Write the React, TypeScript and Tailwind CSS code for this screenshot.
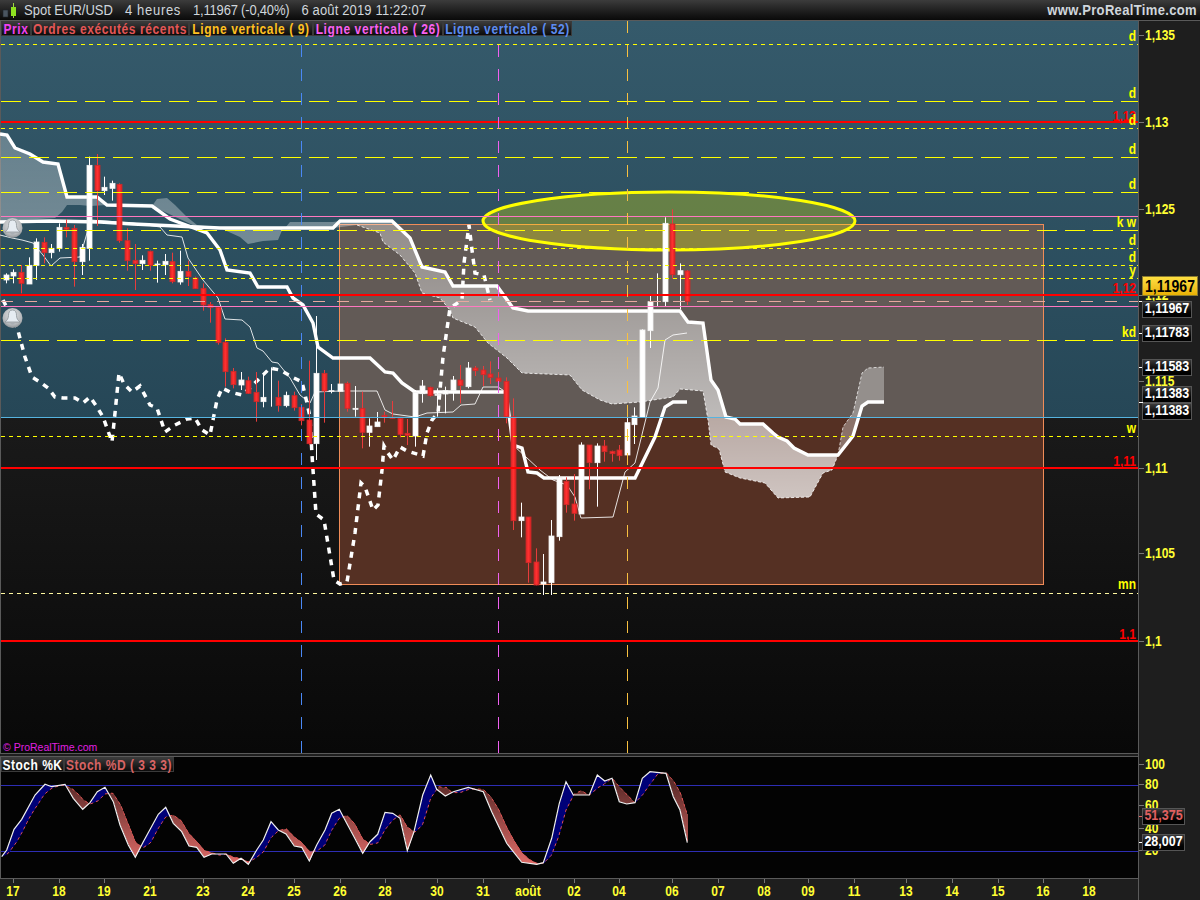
import React from 'react';

type Candle = [number, 'W' | 'R', number, number, number, number];

// candle rows: x, colour, wick top, body top, body bottom, wick bottom (3x crop units)
const leftCandles: Candle[] = [
  [19, 'W', 430, 435, 450, 460], [40, 'W', 418, 427, 438, 460], [64, 'R', 405, 427, 460, 490],
  [88, 'W', 382, 406, 462, 462], [109, 'W', 325, 336, 406, 450], [133, 'R', 322, 337, 368, 400],
  [154, 'W', 342, 355, 368, 385], [178, 'W', 280, 292, 355, 365], [199, 'R', 268, 292, 298, 322],
  [223, 'R', 285, 295, 395, 470], [247, 'W', 342, 352, 395, 435], [268, 'W', 80, 106, 355, 392],
  [292, 'R', 72, 106, 182, 288], [313, 'W', 140, 172, 182, 195], [337, 'W', 152, 160, 175, 212],
  [358, 'R', 160, 163, 332, 338], [382, 'R', 295, 332, 392, 422], [406, 'R', 342, 391, 401, 480],
  [427, 'W', 376, 391, 401, 420], [451, 'R', 362, 364, 406, 422], [472, 'W', 392, 402, 404, 458],
  [496, 'W', 372, 394, 404, 435], [517, 'R', 368, 395, 455, 460], [541, 'W', 362, 424, 456, 464],
  [565, 'R', 392, 424, 440, 468], [586, 'R', 440, 444, 476, 476], [610, 'R', 460, 475, 525, 542],
  [631, 'R', 516, 524, 532, 578], [655, 'R', 528, 532, 638, 644], [676, 'R', 625, 637, 725, 770],
  [700, 'R', 714, 724, 764, 775], [724, 'W', 726, 750, 765, 780], [745, 'R', 740, 752, 790, 792],
  [769, 'R', 726, 787, 815, 875], [790, 'W', 730, 802, 815, 832], [814, 'W', 712, 802, 803, 830],
  [835, 'R', 752, 802, 827, 845], [859, 'W', 785, 796, 827, 832], [883, 'R', 785, 797, 833, 842],
  [904, 'R', 822, 832, 872, 886], [928, 'R', 692, 870, 941, 945], [949, 'W', 558, 730, 941, 990],
  [973, 'R', 720, 730, 783, 878], [994, 'W', 762, 782, 784, 790],
];

const rightCandles: Candle[] = [
  [0, 'W', 552, 552, 574, 574], [21, 'R', 545, 550, 625, 635], [45, 'W', 558, 625, 628, 650],
  [66, 'R', 575, 625, 697, 745], [88, 'W', 655, 678, 697, 740], [112, 'W', 636, 666, 680, 680],
  [133, 'R', 635, 646, 651, 668], [157, 'R', 603, 653, 655, 655], [180, 'R', 655, 655, 703, 712],
  [202, 'R', 657, 700, 706, 735], [226, 'W', 570, 578, 708, 740], [247, 'W', 540, 558, 581, 608],
  [271, 'R', 560, 562, 587, 590], [292, 'W', 565, 583, 586, 650], [316, 'W', 560, 572, 582, 640],
  [340, 'W', 528, 540, 572, 602], [361, 'R', 495, 540, 556, 610], [385, 'W', 486, 504, 560, 565],
  [406, 'R', 498, 504, 512, 528], [430, 'R', 498, 510, 524, 558], [451, 'R', 484, 522, 532, 552],
  [475, 'R', 516, 534, 544, 556], [498, 'R', 532, 544, 650, 670], [520, 'R', 595, 650, 962, 990],
  [544, 'W', 908, 951, 962, 1012], [565, 'R', 951, 951, 1088, 1148], [589, 'R', 1045, 1086, 1155, 1156],
  [610, 'W', 1062, 1146, 1152, 1185], [634, 'W', 960, 1008, 1148, 1185], [658, 'W', 825, 832, 1010, 1022],
  [679, 'R', 832, 844, 914, 938], [703, 'R', 822, 912, 940, 962], [724, 'W', 727, 735, 942, 942],
  [748, 'R', 735, 735, 788, 868], [772, 'W', 730, 738, 788, 920], [793, 'R', 720, 738, 755, 785],
  [817, 'R', 752, 754, 761, 785], [838, 'R', 735, 750, 767, 782], [862, 'W', 635, 668, 765, 765],
  [883, 'W', 622, 648, 674, 732], [907, 'W', 388, 390, 652, 652], [931, 'W', 288, 305, 392, 444],
  [952, 'W', 220, 320, 320, 320], [976, 'W', 52, 70, 305, 318], [997, 'R', 28, 72, 224, 236],
  [1021, 'W', 190, 212, 224, 328], [1042, 'R', 210, 213, 304, 315],
];

const candles = [
  ...leftCandles.map(([x, c, a, b, d, e]) => ({ x: Math.round(x / 3), c, a: 130 + a / 3, b: 130 + b / 3, d: 130 + d / 3, e: 130 + e / 3 })),
  ...rightCandles.map(([x, c, a, b, d, e]) => ({ x: Math.round(340 + x / 3), c, a: 200 + a / 3, b: 200 + b / 3, d: 200 + d / 3, e: 200 + e / 3 })),
];

const line1 =
  '0,134 7,135 15,148 30,154 43,162 58,164 67,197 97,197 107,205 152,206 170,219 207,233 220,250 227,270 250,273 258,287 287,287 293,298 303,305 313,323 318,347 333,358 370,358 385,372 393,373 402,383 415,392 506,392 513,445 522,448 528,472 537,473 544,478 635,478 655,437 665,407 673,402 687,402';
const line2 =
  '0,222 50,221 100,222 133,224 197,227 220,228 333,228 340,221 392,221 410,238 422,267 445,272 453,286 497,286 513,308 528,311 680,311 688,322 703,323 711,380 718,390 726,417 735,419 740,424 763,424 773,433 778,437 787,441 794,448 808,455 838,455 853,436 862,406 868,402 884,402';
const thinLine =
  '0,235 12,238 22,240 33,243 43,255 51,266 60,258 80,257 87,233 90,220 133,223 160,227 167,235 182,237 188,258 203,280 218,298 225,319 242,320 250,327 257,348 263,351 272,362 278,363 290,378 300,395 310,403 315,392 340,391 377,391 385,410 393,414 415,417 427,413 453,412 461,405 475,404 483,387 498,387 506,392 513,445 540,470 553,480 567,485 575,497 581,518 613,517 625,472 635,463 650,402 658,388 665,340 673,335 687,333';
const dashedLine =
  '3,300 17,327 25,357 32,377 40,382 48,388 55,397 63,398 75,398 83,403 90,397 97,407 103,417 112,442 115,413 119,373 124,384 132,392 140,386 150,405 157,408 165,432 175,425 187,419 195,418 202,430 210,435 217,400 222,388 230,392 242,395 250,388 258,380 270,368 280,370 292,377 302,382 307,403 310,417 312,455 316,514 324,520 334,580 340,584 347,582 355,533 361,483 365,487 373,510 378,505 382,470 384,446 388,453 393,460 400,447 407,451 423,456 427,433 432,420 438,413 443,357 450,308 462,300 464,263 469,225 472,250 475,273 484,275 490,300';

const cloudBottom =
  '357,225 380,233 383,242 400,255 415,273 422,293 440,298 450,310 453,318 475,327 488,343 507,358 522,373 570,375 582,390 600,400 612,404 640,402 673,397 680,389 703,391 708,420 711,445 719,449 725,472 740,478 765,483 778,498 810,497 823,473 832,470 838,455';
const cloudTop =
  '838,455 808,455 794,448 787,441 778,437 773,433 763,424 740,424 735,419 726,417 718,390 711,380 703,323 688,322 680,311 528,311 513,308 497,286 453,286 445,272 422,267 410,238 392,221 340,221 333,228 357,225';

const clouds = [
  '0,134 7,135 15,148 30,154 43,162 58,164 67,197 97,197 107,205 90,206 80,205 67,205 62,212 55,218 20,220 0,222',
  '152,206 157,199 167,198 175,205 187,217 197,225 220,228 240,237 248,244 263,241 278,240 283,228 197,227',
  '285,228 290,222 333,222 340,221 333,228',
];

const hLines = [
  { y: 44, c: '#ffff00', d: '4 4', w: 1 }, { y: 101, c: '#ffff00', d: '20 8', w: 1 },
  { y: 128, c: '#ffff00', d: '4 4', w: 1 }, { y: 157, c: '#ffff00', d: '20 8', w: 1 },
  { y: 192, c: '#ffff00', d: '20 8', w: 1 }, { y: 216, c: '#ff78c0', d: '', w: 1 },
  { y: 230, c: '#ffff00', d: '20 8', w: 1 }, { y: 248, c: '#ffff00', d: '4 4', w: 1 },
  { y: 265, c: '#ffff00', d: '4 4', w: 1 }, { y: 278, c: '#ffff00', d: '4 4', w: 1 },
  { y: 301, c: '#e8a8a0', d: '12 12', w: 1 }, { y: 306, c: '#ff78c0', d: '', w: 1 },
  { y: 340, c: '#ffff00', d: '20 8', w: 1 }, { y: 417, c: '#56b4e0', d: '', w: 1 },
  { y: 436, c: '#ffff00', d: '4 4', w: 1 }, { y: 593, c: '#fff8a0', d: '4 4', w: 1 },
  { y: 122, c: '#ff0000', d: '', w: 2 }, { y: 295, c: '#ff0000', d: '', w: 2 },
  { y: 468, c: '#ff0000', d: '', w: 2 }, { y: 641, c: '#ff0000', d: '', w: 2 },
];

const vLines = [
  { x: 301.5, c: '#4a88f5' },
  { x: 498.5, c: '#f060f0' },
  { x: 627.5, c: '#f8c040' },
];

const chartLabels = [
  { t: 'd', y: 41, c: '#ffff00' }, { t: 'd', y: 98, c: '#ffff00' }, { t: '1,13', y: 121, c: '#ff0000' },
  { t: 'd', y: 125, c: '#ffff00' }, { t: 'd', y: 154, c: '#ffff00' }, { t: 'd', y: 189, c: '#ffff00' },
  { t: 'k w', y: 227, c: '#ffff00' }, { t: 'd', y: 245, c: '#ffff00' }, { t: 'd', y: 262, c: '#ffff00' },
  { t: 'y', y: 275, c: '#ffff00' }, { t: '1,12', y: 293, c: '#ff0000' }, { t: 'kd', y: 337, c: '#ffff00' },
  { t: 'w', y: 433, c: '#ffff00' }, { t: '1,11', y: 466, c: '#ff0000' }, { t: 'mn', y: 589, c: '#ffff00' },
  { t: '1,1', y: 639, c: '#ff0000' },
];

const legend = [
  { t: 'Prix', c: 'text-[#f040f0]', w: 'w-[30px]' },
  { t: 'Ordres exécutés récents', c: 'text-[#e45656]', w: 'w-[158px]' },
  { t: 'Ligne verticale ( 9)', c: 'text-[#ffc020]', w: 'w-[124px]' },
  { t: 'Ligne verticale ( 26)', c: 'text-[#f860f0]', w: 'w-[130px]' },
  { t: 'Ligne verticale ( 52)', c: 'text-[#5c8cf0]', w: 'w-[129px]' },
];

const priceTicks = [
  { t: '1,135', y: 35 }, { t: '1,13', y: 122 }, { t: '1,125', y: 209 }, { t: '1,12', y: 295 },
  { t: '1,115', y: 381 }, { t: '1,11', y: 468 }, { t: '1,105', y: 553 }, { t: '1,1', y: 641 },
  { t: '100', y: 764 }, { t: '80', y: 784 }, { t: '60', y: 805 }, { t: '40', y: 828 }, { t: '20', y: 850 },
];

const priceBoxes = [
  { t: '1,11967', y: 301, tick: 301, w: 'w-[50px]', color: 'text-white', tickColor: 'bg-white' },
  { t: '1,11783', y: 325, tick: 333, w: 'w-[50px]', color: 'text-white', tickColor: 'bg-white' },
  { t: '1,11583', y: 359, tick: 367, w: 'w-[50px]', color: 'text-white', tickColor: 'bg-white' },
  { t: '1,11383', y: 386, tick: 402, w: 'w-[50px]', color: 'text-white', tickColor: 'bg-white' },
  { t: '1,11383', y: 403, tick: 402, w: 'w-[50px]', color: 'text-white', tickColor: 'bg-white' },
  { t: '51,375', y: 808, tick: 816, w: 'w-[43px]', color: 'text-[#e06060]', tickColor: 'bg-[#e06060]' },
  { t: '28,007', y: 834, tick: 842, w: 'w-[43px]', color: 'text-white', tickColor: 'bg-white' },
];

const dateTicks = [
  ['17', 13], ['18', 59], ['19', 104], ['21', 150], ['23', 203], ['24', 248], ['25', 294], ['26', 340],
  ['28', 385], ['30', 437], ['31', 483], ['août', 528], ['02', 574], ['04', 619], ['06', 672], ['07', 718],
  ['08', 764], ['09', 808], ['11', 854], ['13', 906], ['14', 952], ['15', 998], ['16', 1043], ['18', 1089],
] as const;

// %K in 3x crop units, the second part is offset by 1200
const kRaw: [number, number][] = [
  [5, 380], [20, 360], [42, 298], [65, 268], [105, 195], [135, 163], [155, 170], [195, 163], [220, 205],
  [248, 238], [270, 218], [292, 185], [315, 172], [340, 215], [360, 285], [385, 345], [406, 382], [430, 335],
  [475, 253], [497, 232], [520, 280], [545, 305], [567, 348], [590, 352], [612, 382], [635, 372], [678, 372],
  [700, 400], [723, 385], [745, 403], [770, 360], [790, 330], [813, 275], [835, 300], [858, 312], [883, 348],
  [905, 352], [928, 393], [950, 345], [975, 300], [995, 250], [1018, 238], [1040, 280], [1062, 320], [1088, 370],
  [1110, 335], [1133, 313], [1155, 247], [1178, 250], [1200, 265], [1222, 362], [1242, 305], [1268, 195],
  [1292, 135], [1310, 178], [1336, 198], [1360, 185], [1405, 172], [1450, 185], [1475, 245], [1520, 340],
  [1565, 397], [1610, 403], [1630, 398], [1655, 325], [1678, 220], [1698, 155], [1720, 195], [1768, 195],
  [1792, 135], [1814, 153], [1836, 145], [1858, 215], [1880, 222], [1905, 218], [1927, 145], [1950, 125],
  [1998, 130], [2020, 200], [2040, 240], [2062, 338],
];
const kPts = kRaw.map(([x, y]) => [x / 3, 730 + y / 3]);

function kAt(x: number) {
  if (x <= kPts[0][0]) return kPts[0][1];
  for (let i = 1; i < kPts.length; i++) {
    if (x <= kPts[i][0]) {
      const [x0, y0] = kPts[i - 1];
      const [x1, y1] = kPts[i];
      return y0 + ((y1 - y0) * (x - x0)) / (x1 - x0);
    }
  }
  return kPts[kPts.length - 1][1];
}

const dAt = (x: number) => (kAt(x) + kAt(x - 7.6) + kAt(x - 15.2)) / 3;

const stochSlices: { x: number; k: number; d: number }[] = [];
for (let x = 2; x <= 687; x += 1) stochSlices.push({ x, k: kAt(x), d: dAt(x) });
const dLine = stochSlices.filter((s) => s.x > 6).map((s) => `${s.x},${s.d.toFixed(1)}`).join(' ');
const kLine = kPts.map(([x, y]) => `${x.toFixed(1)},${y.toFixed(1)}`).join(' ');

function Bell({ cy }: { cy: number }) {
  return (
    <g>
      <circle cx="12.5" cy={cy} r="10" fill="url(#bellBall)" />
      <path
        d={`M12.5 ${cy - 8} c-3 0 -4 2.500 -4 5.500 c0 3 -1.500 5 -3.500 6.500 h15 c-2 -1.500 -3.500 -3.500 -3.500 -6.500 c0 -3 -1 -5.500 -4 -5.500 z`}
        fill="#e6ecf2"
        stroke="#8d9499"
        strokeWidth="0.8"
      />
      <path d={`M10.5 ${cy + 4.500} h4 v1 c0 1.500 -4 1.500 -4 0 z`} fill="#a8aeb4" />
    </g>
  );
}

function PriceChart() {
  return (
    <svg viewBox="0 21 1138 732" width="1138" height="732" className="block">
      <defs>
        <linearGradient id="teal" x1="0" y1="0" x2="0" y2="1">
          <stop offset="0" stopColor="#355a6b" />
          <stop offset="1" stopColor="#264757" />
        </linearGradient>
        <linearGradient id="dark" x1="0" y1="0" x2="0" y2="1">
          <stop offset="0" stopColor="#1a1a1a" />
          <stop offset="1" stopColor="#080808" />
        </linearGradient>
        <linearGradient id="cloud" gradientUnits="userSpaceOnUse" x1="0" y1="130" x2="0" y2="500">
          <stop offset="0" stopColor="#fff" stopOpacity="0.26" />
          <stop offset="0.4" stopColor="#fff" stopOpacity="0.36" />
          <stop offset="1" stopColor="#fff" stopOpacity="0.72" />
        </linearGradient>
        <linearGradient id="redBody" x1="0" y1="0" x2="1" y2="0">
          <stop offset="0" stopColor="#e02828" />
          <stop offset="0.5" stopColor="#ff3030" />
          <stop offset="1" stopColor="#d82020" />
        </linearGradient>
        <radialGradient id="bellBall" cx="0.5" cy="0.35" r="0.7">
          <stop offset="0" stopColor="#e0e2e4" />
          <stop offset="0.7" stopColor="#b4b7ba" />
          <stop offset="1" stopColor="#7d8287" />
        </radialGradient>
      </defs>

      <rect x="0" y="21" width="1138" height="396" fill="url(#teal)" />
      <rect x="0" y="417" width="1138" height="337" fill="url(#dark)" />
      <rect x="0" y="21" width="1" height="733" fill="#5a5a5a" />
      <rect x="339.500" y="224.500" width="704" height="193" fill="#625a56" />
      <rect x="339.500" y="417" width="704" height="167.500" fill="#553023" />
      <rect x="339.500" y="224.500" width="704" height="360" fill="none" stroke="#f08c58" />

      {clouds.map((p) => (
        <polygon key={p} points={p} fill="url(#cloud)" />
      ))}
      <polygon points={`${cloudTop} ${cloudBottom}`} fill="url(#cloud)" />
      <polygon
        points="838,455 853,436 862,406 868,402 884,402 884,367 868,368 862,373 853,413 843,427"
        fill="#fff"
        fillOpacity="0.32"
      />
      <polyline points={cloudBottom} fill="none" stroke="#fff" strokeDasharray="3 2" opacity="0.8" />
      <polyline points="838,455 843,427 853,413 862,373 868,368 884,367" fill="none" stroke="#fff" strokeDasharray="3 2" opacity="0.7" />

      <ellipse cx="669" cy="221" rx="186" ry="29" fill="#ffff00" fillOpacity="0.27" stroke="#ffff00" strokeWidth="3" />

      <polyline points={thinLine} fill="none" stroke="#fff" strokeWidth="1" opacity="0.85" />
      <polyline points={line1} fill="none" stroke="#fff" strokeWidth="3.400" />
      <polyline points={line2} fill="none" stroke="#fff" strokeWidth="3.400" />
      <polyline points={dashedLine} fill="none" stroke="#fff" strokeWidth="3.500" strokeDasharray="6 6" />

      {candles.map((k) => (
        <g key={`${k.x}-${k.a}`}>
          <line x1={k.x + 0.5} x2={k.x + 0.5} y1={k.a} y2={k.e} stroke={k.c === 'W' ? '#fff' : '#e83c3c'} />
          {k.d - k.b > 0.5 && (
            <rect
              x={k.x - 2}
              y={k.b}
              width="5"
              height={k.d - k.b}
              fill={k.c === 'W' ? '#fff' : 'url(#redBody)'}
              stroke={k.c === 'W' ? '#f2f2f2' : '#cc2a2a'}
              strokeWidth="0.8"
            />
          )}
        </g>
      ))}

      {hLines.map((l) => {
        const y = l.w === 1 ? l.y + 0.5 : l.y;
        return <line key={l.y} x1="1" x2="1138" y1={y} y2={y} stroke={l.c} strokeWidth={l.w} strokeDasharray={l.d || undefined} />;
      })}
      {vLines.map((l) => (
        <line key={l.x} x1={l.x} x2={l.x} y1="21" y2="754" stroke={l.c} strokeDasharray="12 12" />
      ))}

      {chartLabels.map((l) => (
        <text
          key={`${l.t}-${l.y}`}
          transform={`translate(1136 ${l.y}) scale(1 1.18)`}
          textAnchor="end"
          fill={l.c}
          fontSize="12"
          fontWeight="700"
        >
          {l.t}
        </text>
      ))}

      <Bell cy={228} />
      <Bell cy={318} />

      <text x="3" y="751" fill="#e020e0" fontSize="10.500">
        © ProRealTime.com
      </text>
    </svg>
  );
}

function StochChart() {
  return (
    <svg viewBox="0 757 1138 121" width="1138" height="121" className="block">
      <defs>
        <linearGradient id="stochRed" gradientUnits="userSpaceOnUse" x1="0" y1="785" x2="0" y2="865">
          <stop offset="0" stopColor="#5e2c2a" />
          <stop offset="1" stopColor="#e06c68" />
        </linearGradient>
      </defs>
      <rect x="0" y="757" width="1138" height="121" fill="#030303" />
      <rect x="0" y="757" width="1" height="121" fill="#5a5a5a" />
      <line x1="1" x2="1138" y1="785.500" y2="785.500" stroke="#2d2db4" />
      <line x1="1" x2="1138" y1="851.500" y2="851.500" stroke="#2d2db4" />
      {stochSlices.map((s) => (
        <rect
          key={s.x}
          x={s.x}
          y={Math.min(s.k, s.d)}
          width="1"
          height={Math.abs(s.k - s.d)}
          fill={s.k < s.d ? '#000078' : 'url(#stochRed)'}
        />
      ))}
      <polyline points={dLine} fill="none" stroke="#e05050" strokeDasharray="3 3" />
      <polyline points={kLine} fill="none" stroke="#f0f0f0" strokeWidth="1.200" />
    </svg>
  );
}

export default function App() {
  return (
    <div className="flex h-[900px] w-[1200px] flex-col overflow-hidden bg-[#1e1e1e] font-['Liberation_Sans',Arial,sans-serif]">
      {/* Title bar */}
      <header className="flex h-[21px] shrink-0 items-center justify-between border-b border-[#5a5a5a] bg-gradient-to-b from-[#3c3c3c] to-[#0a0a0a] pr-[3px] text-[13px] text-[#d0d6dc]">
        <div className="flex items-center">
          <svg width="24" height="20" viewBox="0 0 24 20" className="shrink-0">
            <rect x="3" y="10" width="5" height="7" fill="#4a5560" stroke="#20262c" strokeWidth="0.6" />
            <line x1="13.500" x2="13.500" y1="3" y2="18" stroke="#9cd83c" />
            <rect x="11" y="7" width="5" height="9" fill="#8ee020" />
          </svg>
          <span className="inline-block scale-y-[1.15]">Spot EUR/USD</span>
          <span className="ml-[12px] inline-block scale-y-[1.15] tracking-[0.7px]">4 heures</span>
          <span className="ml-[12px] inline-block scale-y-[1.15] tracking-[-0.2px]">1,11967 (-0,40%)</span>
          <span className="ml-[12px] inline-block scale-y-[1.15] tracking-[0.15px]">6 août 2019 11:22:07</span>
        </div>
        <span className="inline-block scale-y-[1.15] font-bold tracking-[0.35px]">www.ProRealTime.com</span>
      </header>

      <div className="flex flex-1">
        <div className="flex w-[1138px] shrink-0 flex-col">
          {/* Price panel */}
          <div className="relative h-[733px] border-b border-[#5a5a5a]">
            <PriceChart />
            <div className="absolute left-[1px] top-0 flex">
              {legend.map((l) => (
                <span
                  key={l.t}
                  className={`flex h-[15px] items-center justify-center border border-[#3a3a3a] bg-gradient-to-b from-[#3a3a3a] to-[#0c0c0c] text-[12px] font-bold tracking-[0.6px] ${l.c} ${l.w}`}
                >
                  <span className="inline-block scale-y-[1.15]">{l.t}</span>
                </span>
              ))}
            </div>
          </div>

          {/* Stochastic panel */}
          <div className="relative mt-[2px] h-[123px] border-y border-[#5a5a5a]">
            <StochChart />
            <div className="absolute left-[1px] top-0 flex">
              <span className="flex h-[15px] w-[63px] items-center justify-center border border-[#3a3a3a] bg-gradient-to-b from-[#3a3a3a] to-[#0c0c0c] text-[12px] font-bold tracking-[0.5px] text-white">
                <span className="inline-block scale-y-[1.15]">Stoch %K</span>
              </span>
              <span className="flex h-[15px] w-[110px] items-center justify-center border border-[#3a3a3a] bg-gradient-to-b from-[#3a3a3a] to-[#0c0c0c] text-[12px] font-bold tracking-[0.5px] text-[#d86464]">
                <span className="inline-block scale-y-[1.15]">Stoch %D ( 3 3 3)</span>
              </span>
            </div>
          </div>

          {/* Date axis */}
          <div className="relative flex-1">
            {dateTicks.map(([t, x]) => (
              <React.Fragment key={`${t}-${x}`}>
                <span className="absolute top-0 h-[4px] w-[1px] bg-[#777]" style={{ left: x }} />
                <span
                  className="absolute top-[4px] -translate-x-1/2 scale-y-[1.18] text-[12px] font-bold leading-[16px] text-[#ffff33]"
                  style={{ left: x }}
                >
                  {t}
                </span>
              </React.Fragment>
            ))}
          </div>
        </div>

        {/* Price axis */}
        <div className="relative flex-1 border-l border-[#5a5a5a]">
          {priceTicks.map((p) => (
            <React.Fragment key={p.t}>
              <span className="absolute left-0 h-[1px] w-[5px] bg-[#777]" style={{ top: p.y - 21 }} />
              <span
                className="absolute left-[6px] scale-y-[1.18] text-[12px] font-bold leading-[14px] text-[#ffff33]"
                style={{ top: p.y - 28 }}
              >
                {p.t}
              </span>
            </React.Fragment>
          ))}

          <span className="absolute left-[3px] top-[255px] flex h-[20px] w-[56px] items-center justify-center border border-[#8a7a30] bg-gradient-to-b from-[#ffe040] to-[#e8b000] text-[14px] font-bold text-black">
            <span className="inline-block scale-y-[1.12]">1,11967</span>
          </span>

          {priceBoxes.map((b) => (
            <React.Fragment key={`${b.t}-${b.y}`}>
              <span className={`absolute left-0 h-[1px] w-[4px] ${b.tickColor}`} style={{ top: b.tick - 21 }} />
              <span
                className={`absolute left-[3px] flex h-[17px] items-center justify-center border border-[#555] bg-gradient-to-b from-[#3a3a3a] to-black text-[12.5px] font-bold ${b.color} ${b.w}`}
                style={{ top: b.y - 21 }}
              >
                <span className="inline-block scale-y-[1.12]">{b.t}</span>
              </span>
            </React.Fragment>
          ))}
        </div>
      </div>
    </div>
  );
}
